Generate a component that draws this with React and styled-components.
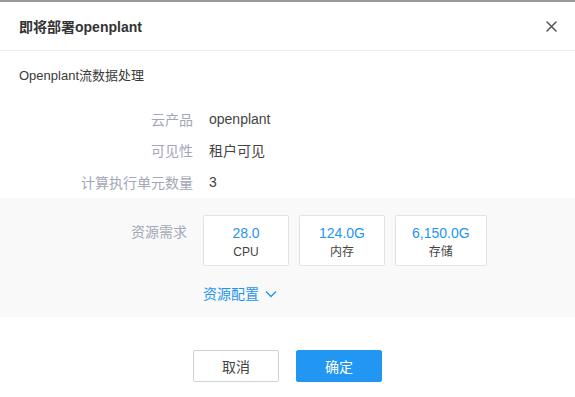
import React from 'react';
import styled, { createGlobalStyle } from 'styled-components';

const GlobalStyle = createGlobalStyle`
    html, body {
        margin: 0;
        padding: 0;
        background: #ffffff;
    }

    body {
        font-family: "Liberation Sans", "Noto Sans CJK SC", sans-serif;
        color: #333333;
    }
`;

const Dialog = styled.div`
    width: 575px;
    height: 397px;
    box-sizing: border-box;
    border-top: 2px solid #999999;
    background: #ffffff;
    display: flex;
    flex-direction: column;
`;

const Header = styled.div`
    height: 49px;
    flex-shrink: 0;
    box-sizing: border-box;
    padding: 0 19px;
    display: flex;
    align-items: center;
    justify-content: space-between;
    border-bottom: 1px solid #ececec;

    h2 {
        margin: 0;
        font-size: 14px;
        font-weight: 700;
        color: #333333;
    }
`;

const CloseButton = styled.button`
    border: none;
    background: none;
    padding: 0;
    width: 14px;
    height: 14px;
    display: flex;
    align-items: center;
    justify-content: center;
    margin-right: -2px;
    cursor: pointer;
`;

const Subtitle = styled.div`
    padding: 15px 19px 0;
    font-size: 13px;
    line-height: 20px;
    color: #3a3a3a;
`;

const InfoList = styled.div`
    margin-top: 17px;
    padding-left: 19px;
`;

const InfoRow = styled.div`
    display: grid;
    grid-template-columns: ${props => props.labelWidth}px 1fr;
    column-gap: 16px;
    height: 31.5px;
    align-items: center;
    font-size: 14px;
`;

const Label = styled.span`
    text-align: right;
    color: #a2a7b6;
`;

const Value = styled.span`
    color: #444444;
`;

const ResourceSection = styled.div`
    background: #f9f9f9;
    padding: 17px 0 13px 19px;
    height: 119px;
    flex-shrink: 0;
    box-sizing: border-box;
`;

const ResourceRow = styled.div`
    display: grid;
    grid-template-columns: 168px 1fr;
    column-gap: 16px;
    font-size: 14px;

    ${Label} {
        padding-top: 7px;
        line-height: 20px;
    }
`;

const Cards = styled.div`
    display: flex;
    gap: 10px;
`;

const Card = styled.div`
    min-width: 86px;
    box-sizing: border-box;
    padding: 8px 16px 4px;
    background: #ffffff;
    border: 1px solid #e3e3e3;
    border-radius: 2px;
    display: flex;
    flex-direction: column;
    align-items: center;
    gap: 1px;

    .amount {
        font-size: 14px;
        line-height: 18px;
        color: #1f95ef;
    }

    .name {
        font-size: 12px;
        line-height: 18px;
        color: #444444;
    }
`;

const ConfigLink = styled.a`
    margin: 18px 0 0 184px;
    display: inline-flex;
    align-items: center;
    gap: 6px;
    font-size: 14px;
    line-height: 20px;
    color: #1f95ef;
    cursor: pointer;
`;

const Footer = styled.div`
    margin-top: 33px;
    display: flex;
    justify-content: center;
    gap: 17px;
`;

const Button = styled.button`
    width: 86px;
    height: 32px;
    box-sizing: border-box;
    border-radius: 2px;
    font-family: inherit;
    font-size: 14px;
    cursor: pointer;
    border: 1px solid ${props => props.primary ? '#2196f3' : '#d2d2d2'};
    background: ${props => props.primary ? '#2196f3' : '#ffffff'};
    color: ${props => props.primary ? '#ffffff' : '#444444'};
`;

const CloseIcon = () => (
    <svg width="11" height="11" viewBox="0 0 11 11">
        <path d="M1 1 L10 10 M10 1 L1 10" stroke="#555555" strokeWidth="1.5" strokeLinecap="round" />
    </svg>
);

const ChevronIcon = () => (
    <svg width="12" height="8" viewBox="0 0 12 8">
        <polyline points="1,1.5 6,6.5 11,1.5" fill="none" stroke="#1f95ef" strokeWidth="1.4" />
    </svg>
);

const info = [
    { label: '云产品', value: 'openplant' },
    { label: '可见性', value: '租户可见' },
    { label: '计算执行单元数量', value: '3' },
];

const resources = [
    { amount: '28.0', name: 'CPU' },
    { amount: '124.0G', name: '内存' },
    { amount: '6,150.0G', name: '存储' },
];

const App = () => {
    return (
        <>
            <GlobalStyle />
            <Dialog>
                <Header>
                    <h2>即将部署openplant</h2>
                    <CloseButton aria-label="close">
                        <CloseIcon />
                    </CloseButton>
                </Header>

                <Subtitle>Openplant流数据处理</Subtitle>

                <InfoList>
                    {info.map(item => (
                        <InfoRow key={item.label} labelWidth={174}>
                            <Label>{item.label}</Label>
                            <Value>{item.value}</Value>
                        </InfoRow>
                    ))}
                </InfoList>

                <ResourceSection>
                    <ResourceRow>
                        <Label>资源需求</Label>
                        <Cards>
                            {resources.map(r => (
                                <Card key={r.name}>
                                    <span className="amount">{r.amount}</span>
                                    <span className="name">{r.name}</span>
                                </Card>
                            ))}
                        </Cards>
                    </ResourceRow>
                    <ConfigLink>
                        资源配置
                        <ChevronIcon />
                    </ConfigLink>
                </ResourceSection>

                <Footer>
                    <Button>取消</Button>
                    <Button primary>确定</Button>
                </Footer>
            </Dialog>
        </>
    );
};

export default App;
